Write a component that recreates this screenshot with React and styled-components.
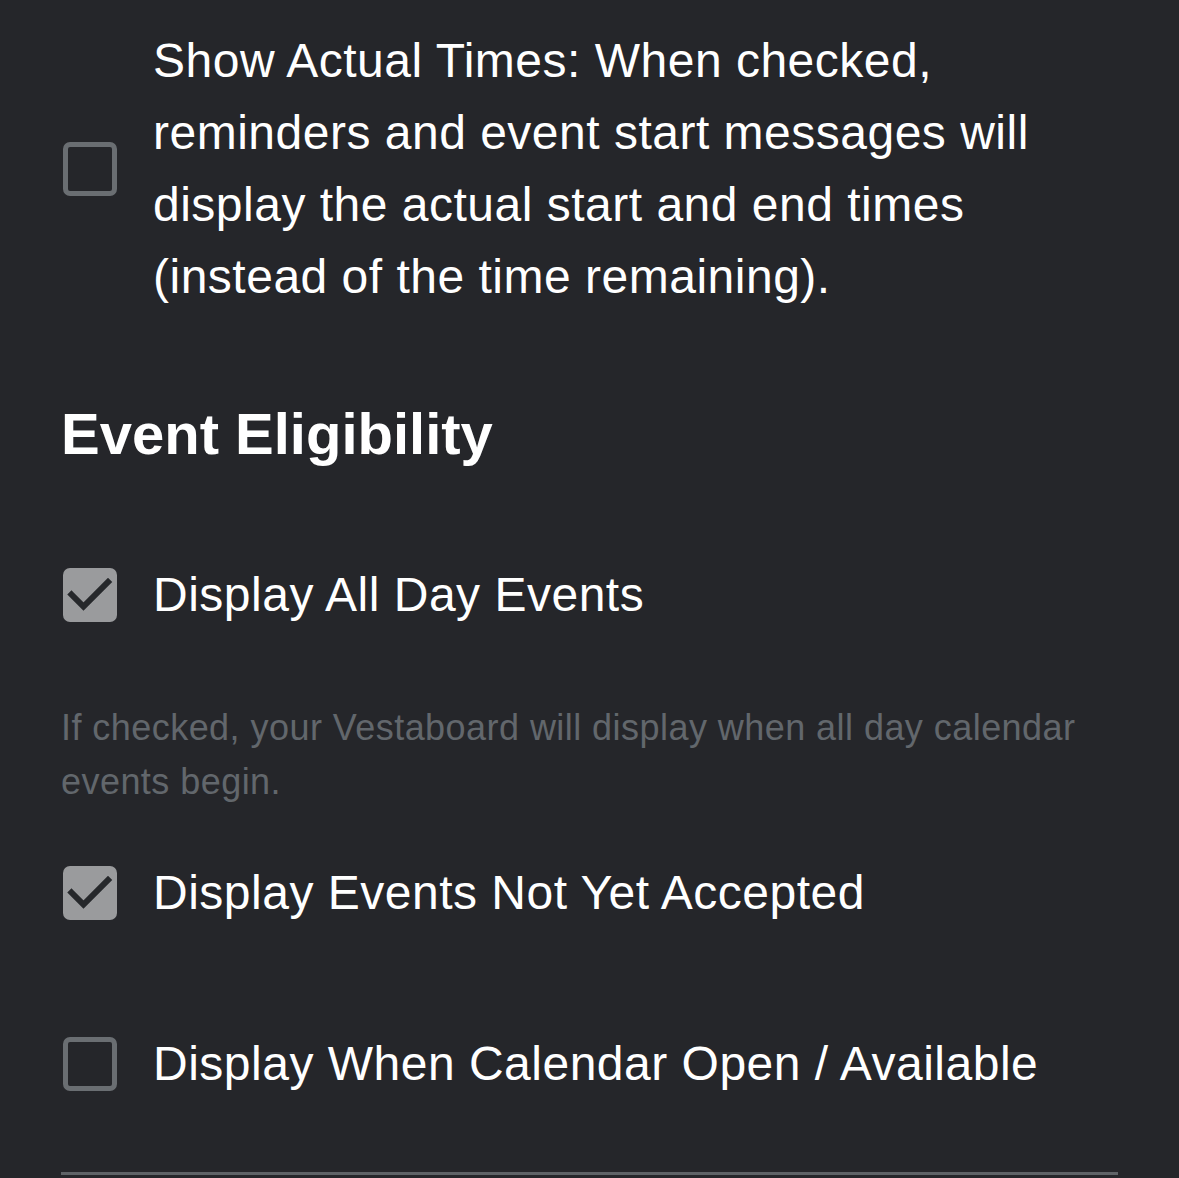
import React, { useState } from 'react';
import styled, { createGlobalStyle } from 'styled-components';

const GlobalStyle = createGlobalStyle`
  html, body {
    margin: 0;
    padding: 0;
    background: #25262a;
  }
  body {
    font-family: 'Liberation Sans', Arial, Helvetica, sans-serif;
    -webkit-font-smoothing: antialiased;
  }
`;

const Page = styled.div`
  min-height: 1178px;
  padding: 25px 61px 0 61px;
  box-sizing: border-box;
  color: #ffffff;
`;

const Option = styled.label`
  display: flex;
  align-items: center;
  gap: 36px;
  margin-top: ${p => p.$top || 0}px;
  cursor: pointer;
`;

const Box = styled.span`
  flex: 0 0 auto;
  width: 54px;
  height: 54px;
  margin-left: 2px;
  box-sizing: border-box;
  border-radius: 7px;
  border: ${p => (p.$checked ? 'none' : '5px solid #6a6e72')};
  background: ${p => (p.$checked ? '#9a9b9d' : 'transparent')};
  display: flex;
  align-items: center;
  justify-content: center;
`;

const Label = styled.span`
  font-size: 48px;
  line-height: 72px;
  letter-spacing: 0.5px;
  max-width: 964px;
`;

const Heading = styled.h2`
  margin: 86px 0 0 0;
  font-size: 58px;
  line-height: 70px;
  font-weight: 700;
`;

const Help = styled.p`
  margin: 70px 0 0 0;
  font-size: 36px;
  line-height: 54px;
  letter-spacing: 0.45px;
  color: #62676c;
`;

const Divider = styled.hr`
  margin: 72px 0 0 0;
  border: none;
  height: 3px;
  background: #5f6367;
`;

const Check = () => (
  <svg width="54" height="54" viewBox="0 0 54 54">
    <path
      d="M8.5 26.5 L20.5 38.5 L45 14"
      fill="none"
      stroke="#26282b"
      strokeWidth="6"
      strokeLinecap="square"
    />
  </svg>
);

const Checkbox = ({ checked, onToggle, children, top }) => (
  <Option $top={top} onClick={onToggle}>
    <Box $checked={checked}>{checked && <Check />}</Box>
    <Label>{children}</Label>
  </Option>
);

export default function App() {
  const [opts, setOpts] = useState({
    actual: false,
    allDay: true,
    notAccepted: true,
    open: false,
  });
  const toggle = key => () => setOpts(o => ({ ...o, [key]: !o[key] }));

  return (
    <>
      <GlobalStyle />
      <Page>
        <Checkbox checked={opts.actual} onToggle={toggle('actual')}>
          Show Actual Times: When checked, reminders and event start messages
          will display the actual start and end times (instead of the time
          remaining).
        </Checkbox>

        <Heading>Event Eligibility</Heading>

        <Checkbox top={90} checked={opts.allDay} onToggle={toggle('allDay')}>
          Display All Day Events
        </Checkbox>
        <Help>
          If checked, your Vestaboard will display when all day calendar events
          begin.
        </Help>

        <Checkbox top={48} checked={opts.notAccepted} onToggle={toggle('notAccepted')}>
          Display Events Not Yet Accepted
        </Checkbox>

        <Checkbox top={99} checked={opts.open} onToggle={toggle('open')}>
          Display When Calendar Open / Available
        </Checkbox>

        <Divider />
      </Page>
    </>
  );
}
